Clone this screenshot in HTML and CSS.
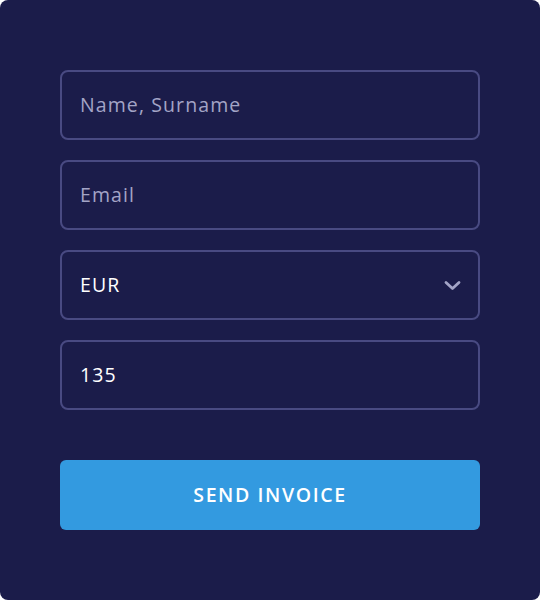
FILE: index.html
```html
<!DOCTYPE html>
<html>
<head>
<meta charset="utf-8">
<link rel="stylesheet" href="styles.css">
</head>
<body>
<div class="card">
  <form class="form">
    <div class="field"><span class="placeholder">Name, Surname</span></div>
    <div class="field"><span class="placeholder">Email</span></div>
    <div class="field select">
      <span class="value">EUR</span>
      <svg class="chevron" width="17" height="11" viewBox="0 0 17 11"><path d="M2 2.5 L8.5 8.5 L15 2.5" fill="none" stroke="#a3a4c6" stroke-width="2.8" stroke-linecap="round" stroke-linejoin="round"/></svg>
    </div>
    <div class="field"><span class="value">135</span></div>
    <button type="button" class="submit">SEND INVOICE</button>
  </form>
</div>
</body>
</html>
```
FILE: styles.css
```css
html, body { margin: 0; padding: 0; background: #ffffff; }
body { font-family: "Open Sans", "Noto Sans", sans-serif; }
.card {
  width: 540px;
  height: 600px;
  background: #1b1c4a;
  border-radius: 8px;
  box-sizing: border-box;
  padding: 70px 60px;
}
.form { display: flex; flex-direction: column; gap: 20px; }
.field {
  height: 70px;
  box-sizing: border-box;
  border: 2px solid #494a82;
  border-radius: 8px;
  padding: 0 18px 2px;
  display: flex;
  align-items: center;
  justify-content: space-between;
  font-size: 19.5px;
  letter-spacing: 1.1px;
}
.placeholder { color: #a3a4c6; }
.value { color: #ffffff; }
.chevron { margin-right: -1px; margin-top: 2px; }
.submit {
  margin-top: 30px;
  height: 70px;
  border: none;
  border-radius: 6px;
  padding: 0 0 2px;
  background: #339ae0;
  color: #ffffff;
  font-family: "Open Sans", "Noto Sans", sans-serif;
  font-size: 19.5px;
  font-weight: 600;
  letter-spacing: 1.6px;
}
```
